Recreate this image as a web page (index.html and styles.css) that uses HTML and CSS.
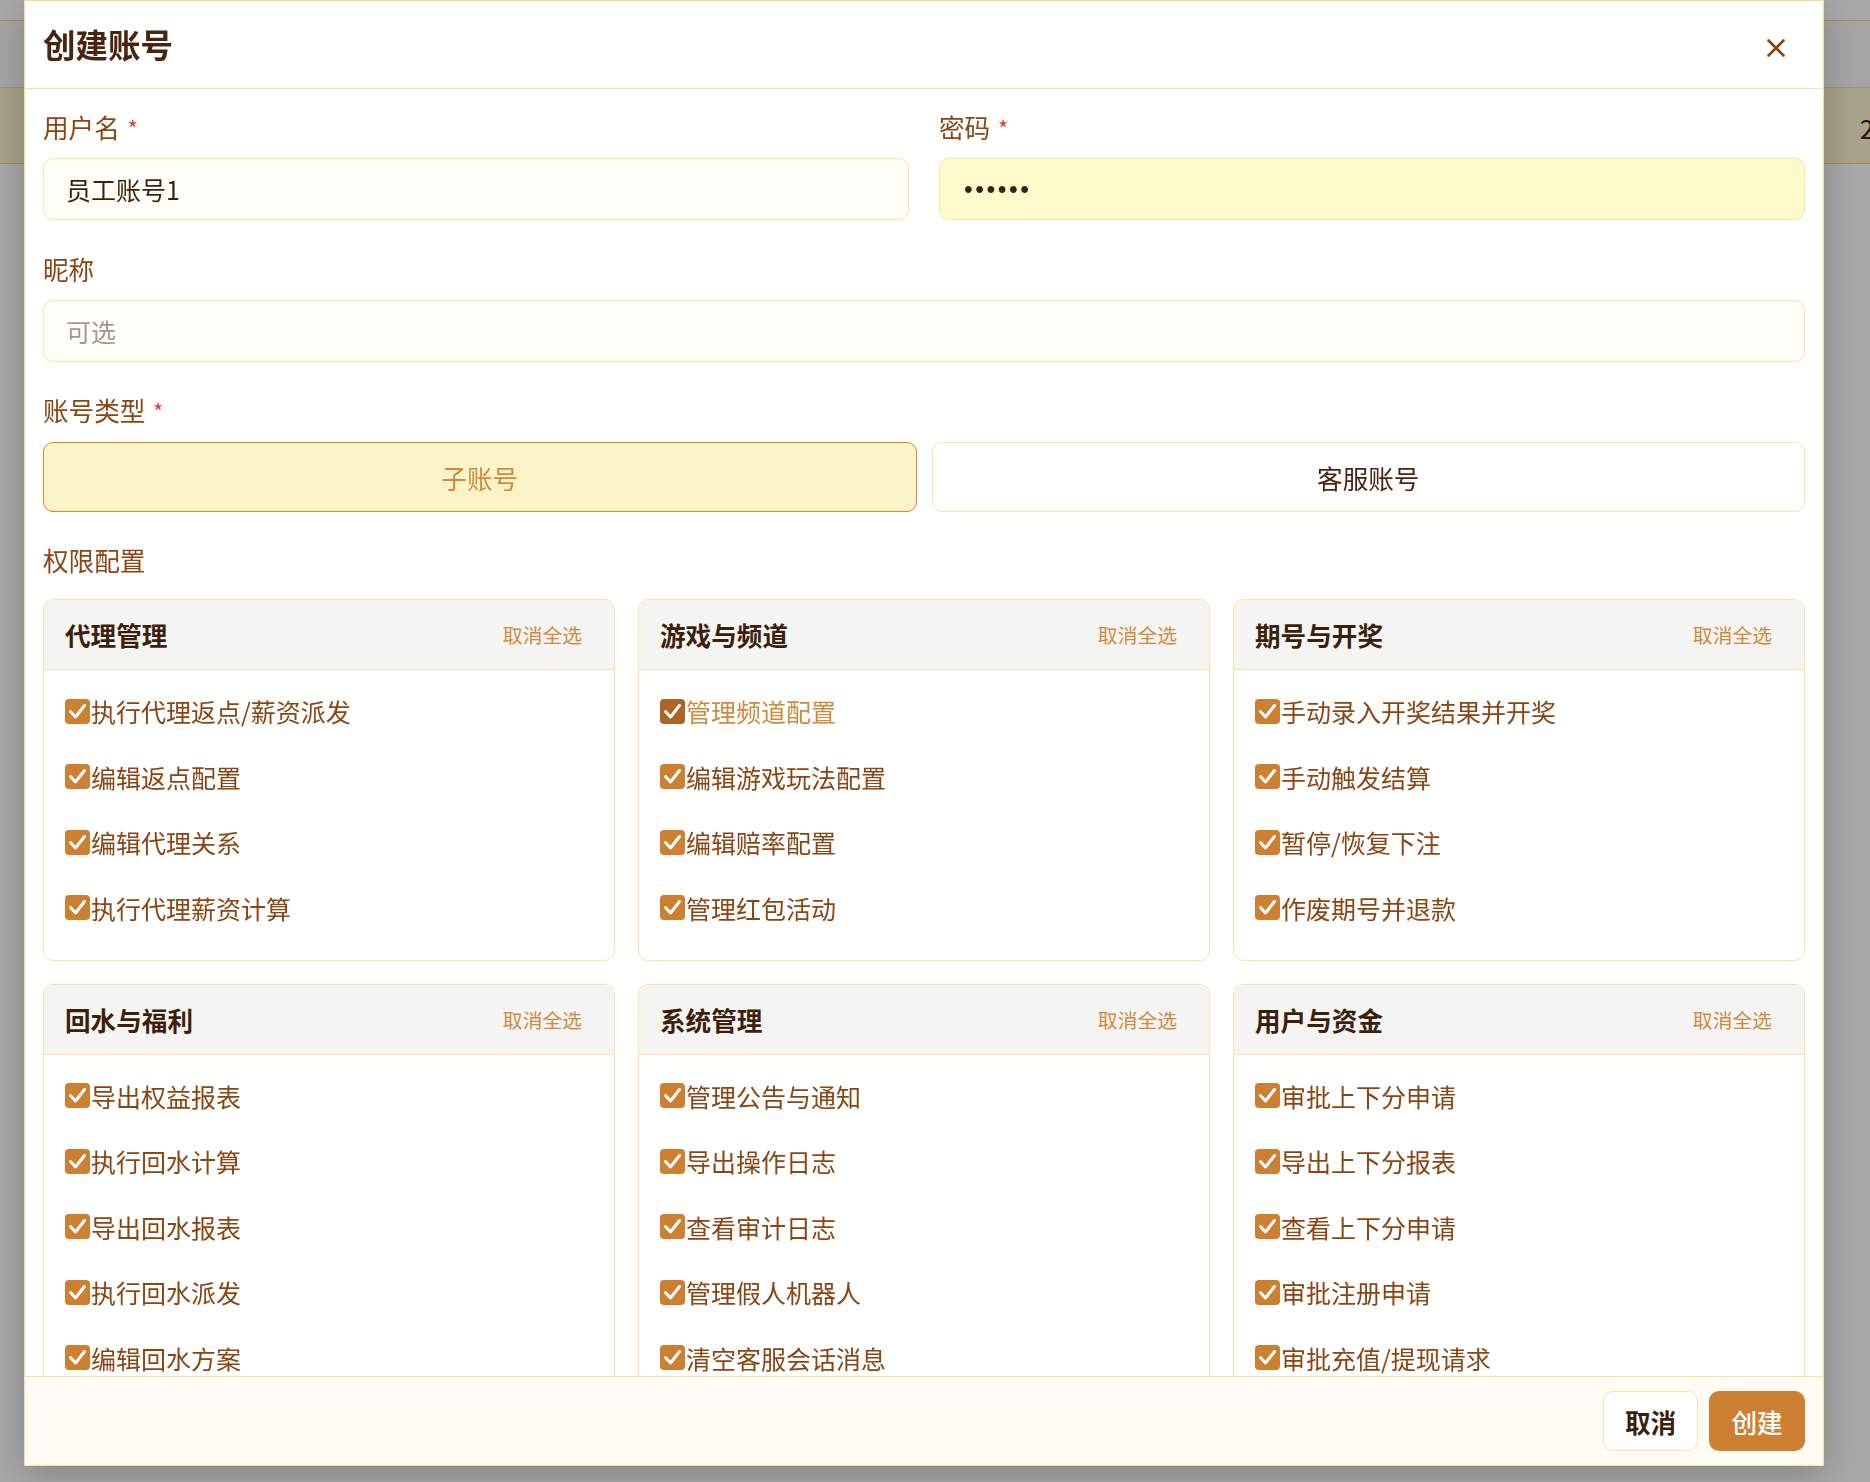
FILE: index.html
```html
<!DOCTYPE html>
<html lang="zh-CN">
<head>
<meta charset="utf-8">
<title>创建账号</title>
<link rel="stylesheet" href="styles.css">
</head>
<body>
<div class="page">
  <div class="page-top"></div>
  <div class="page-sub"></div>
  <div class="page-band"><span class="band-num">2</span></div>
</div>

<div class="overlay">
  <div class="modal">
    <div class="modal-header">
      <h2 class="modal-title">创建账号</h2>
      <button class="close-btn" aria-label="关闭">
        <svg width="18" height="18" viewBox="0 0 18 18"><path d="M1.5 1.5 L16.5 16.5 M16.5 1.5 L1.5 16.5" stroke="#8b4513" stroke-width="2.6" stroke-linecap="round" fill="none"/></svg>
      </button>
    </div>

    <div class="modal-body">
      <div class="row-2 group">
        <div class="field">
          <label class="field-label">用户名 <span class="req">*</span></label>
          <input class="text-input" type="text" value="员工账号1">
        </div>
        <div class="field">
          <label class="field-label">密码 <span class="req">*</span></label>
          <input class="text-input autofill" type="password" value="123456">
        </div>
      </div>

      <div class="field group group-nick">
        <label class="field-label">昵称</label>
        <input class="text-input" type="text" placeholder="可选">
      </div>

      <div class="field group group-type">
        <label class="field-label type-label">账号类型 <span class="req">*</span></label>
        <div class="type-row">
          <button class="type-btn active">子账号</button>
          <button class="type-btn">客服账号</button>
        </div>
      </div>

      <div class="field group">
        <label class="field-label perm-label">权限配置</label>
        <div class="perm-grid">
          <div class="card">
            <div class="card-header"><span class="card-title">代理管理</span><button class="deselect">取消全选</button></div>
            <div class="card-body">
              <label class="item"><span class="cb"><svg viewBox="0 0 25 25"><path d="M5.5 12.5 L10.5 18 L19.5 6.5"/></svg></span>执行代理返点/薪资派发</label>
              <label class="item"><span class="cb"><svg viewBox="0 0 25 25"><path d="M5.5 12.5 L10.5 18 L19.5 6.5"/></svg></span>编辑返点配置</label>
              <label class="item"><span class="cb"><svg viewBox="0 0 25 25"><path d="M5.5 12.5 L10.5 18 L19.5 6.5"/></svg></span>编辑代理关系</label>
              <label class="item"><span class="cb"><svg viewBox="0 0 25 25"><path d="M5.5 12.5 L10.5 18 L19.5 6.5"/></svg></span>执行代理薪资计算</label>
            </div>
          </div>
          <div class="card">
            <div class="card-header"><span class="card-title">游戏与频道</span><button class="deselect">取消全选</button></div>
            <div class="card-body">
              <label class="item hover"><span class="cb"><svg viewBox="0 0 25 25"><path d="M5.5 12.5 L10.5 18 L19.5 6.5"/></svg></span>管理频道配置</label>
              <label class="item"><span class="cb"><svg viewBox="0 0 25 25"><path d="M5.5 12.5 L10.5 18 L19.5 6.5"/></svg></span>编辑游戏玩法配置</label>
              <label class="item"><span class="cb"><svg viewBox="0 0 25 25"><path d="M5.5 12.5 L10.5 18 L19.5 6.5"/></svg></span>编辑赔率配置</label>
              <label class="item"><span class="cb"><svg viewBox="0 0 25 25"><path d="M5.5 12.5 L10.5 18 L19.5 6.5"/></svg></span>管理红包活动</label>
            </div>
          </div>
          <div class="card">
            <div class="card-header"><span class="card-title">期号与开奖</span><button class="deselect">取消全选</button></div>
            <div class="card-body">
              <label class="item"><span class="cb"><svg viewBox="0 0 25 25"><path d="M5.5 12.5 L10.5 18 L19.5 6.5"/></svg></span>手动录入开奖结果并开奖</label>
              <label class="item"><span class="cb"><svg viewBox="0 0 25 25"><path d="M5.5 12.5 L10.5 18 L19.5 6.5"/></svg></span>手动触发结算</label>
              <label class="item"><span class="cb"><svg viewBox="0 0 25 25"><path d="M5.5 12.5 L10.5 18 L19.5 6.5"/></svg></span>暂停/恢复下注</label>
              <label class="item"><span class="cb"><svg viewBox="0 0 25 25"><path d="M5.5 12.5 L10.5 18 L19.5 6.5"/></svg></span>作废期号并退款</label>
            </div>
          </div>
          <div class="card">
            <div class="card-header"><span class="card-title">回水与福利</span><button class="deselect">取消全选</button></div>
            <div class="card-body">
              <label class="item"><span class="cb"><svg viewBox="0 0 25 25"><path d="M5.5 12.5 L10.5 18 L19.5 6.5"/></svg></span>导出权益报表</label>
              <label class="item"><span class="cb"><svg viewBox="0 0 25 25"><path d="M5.5 12.5 L10.5 18 L19.5 6.5"/></svg></span>执行回水计算</label>
              <label class="item"><span class="cb"><svg viewBox="0 0 25 25"><path d="M5.5 12.5 L10.5 18 L19.5 6.5"/></svg></span>导出回水报表</label>
              <label class="item"><span class="cb"><svg viewBox="0 0 25 25"><path d="M5.5 12.5 L10.5 18 L19.5 6.5"/></svg></span>执行回水派发</label>
              <label class="item"><span class="cb"><svg viewBox="0 0 25 25"><path d="M5.5 12.5 L10.5 18 L19.5 6.5"/></svg></span>编辑回水方案</label>
            </div>
          </div>
          <div class="card">
            <div class="card-header"><span class="card-title">系统管理</span><button class="deselect">取消全选</button></div>
            <div class="card-body">
              <label class="item"><span class="cb"><svg viewBox="0 0 25 25"><path d="M5.5 12.5 L10.5 18 L19.5 6.5"/></svg></span>管理公告与通知</label>
              <label class="item"><span class="cb"><svg viewBox="0 0 25 25"><path d="M5.5 12.5 L10.5 18 L19.5 6.5"/></svg></span>导出操作日志</label>
              <label class="item"><span class="cb"><svg viewBox="0 0 25 25"><path d="M5.5 12.5 L10.5 18 L19.5 6.5"/></svg></span>查看审计日志</label>
              <label class="item"><span class="cb"><svg viewBox="0 0 25 25"><path d="M5.5 12.5 L10.5 18 L19.5 6.5"/></svg></span>管理假人机器人</label>
              <label class="item"><span class="cb"><svg viewBox="0 0 25 25"><path d="M5.5 12.5 L10.5 18 L19.5 6.5"/></svg></span>清空客服会话消息</label>
            </div>
          </div>
          <div class="card">
            <div class="card-header"><span class="card-title">用户与资金</span><button class="deselect">取消全选</button></div>
            <div class="card-body">
              <label class="item"><span class="cb"><svg viewBox="0 0 25 25"><path d="M5.5 12.5 L10.5 18 L19.5 6.5"/></svg></span>审批上下分申请</label>
              <label class="item"><span class="cb"><svg viewBox="0 0 25 25"><path d="M5.5 12.5 L10.5 18 L19.5 6.5"/></svg></span>导出上下分报表</label>
              <label class="item"><span class="cb"><svg viewBox="0 0 25 25"><path d="M5.5 12.5 L10.5 18 L19.5 6.5"/></svg></span>查看上下分申请</label>
              <label class="item"><span class="cb"><svg viewBox="0 0 25 25"><path d="M5.5 12.5 L10.5 18 L19.5 6.5"/></svg></span>审批注册申请</label>
              <label class="item"><span class="cb"><svg viewBox="0 0 25 25"><path d="M5.5 12.5 L10.5 18 L19.5 6.5"/></svg></span>审批充值/提现请求</label>
            </div>
          </div>
        </div>
      </div>
    </div>

    <div class="modal-footer">
      <button class="btn btn-cancel">取消</button>
      <button class="btn btn-primary">创建</button>
    </div>
  </div>
</div>
</body>
</html>
```

FILE: styles.css
```css
* { box-sizing: border-box; }

html, body {
  margin: 0;
  height: 100%;
}

body {
  font-family: "Noto Sans CJK SC", "Noto Sans", sans-serif;
  background: #ffffff;
  overflow: hidden;
}

/* underlying page (dimmed by the overlay) */
.page { height: 100vh; }
.page-top {
  height: 21px;
  background: #ffffff;
  border-bottom: 1px solid #f3d874;
}
.page-sub {
  height: 67px;
  background: #fbfbfb;
  border-bottom: 1px solid #e9e2c6;
}
.page-band {
  height: 76px;
  background: #fff9d0;
  border-bottom: 1px solid #f1d677;
  display: flex;
  align-items: center;
  justify-content: flex-end;
}
.band-num {
  font-size: 25.6px;
  color: #3b1f0e;
  margin-right: -4px;
  padding-top: 4px;
}

/* overlay + modal */
.overlay {
  position: fixed;
  inset: 0;
  background: rgba(0, 0, 0, 0.34);
  display: flex;
  align-items: flex-start;
  padding-left: 24px;
}

.modal {
  width: 1800px;
  height: 1466px;
  background: #ffffff;
  border: 1px solid #f3df95;
  display: flex;
  flex-direction: column;
  box-shadow: 0 10px 36px rgba(0, 0, 0, 0.22);
}

.modal-header {
  flex: none;
  height: 88px;
  border-bottom: 1px solid #f7e39b;
  display: flex;
  align-items: center;
  justify-content: space-between;
  padding: 0 27px 1px 18px;
}

.modal-title {
  margin: 0;
  font-size: 32.5px;
  font-weight: 700;
  line-height: 1;
  color: #4a2410;
}

.close-btn {
  width: 40px;
  height: 40px;
  border: none;
  background: none;
  padding: 0;
  margin-top: 8px;
  display: flex;
  align-items: center;
  justify-content: center;
}

.modal-body {
  flex: 1;
  min-height: 0;
  overflow: hidden;
  padding: 18px 18px 0;
}

.row-2 {
  display: grid;
  grid-template-columns: 1fr 1fr;
  column-gap: 30px;
}

.group { margin-bottom: 28px; }
.row-2.group { margin-bottom: 29px; }

.field-label {
  display: block;
  font-size: 25.6px;
  line-height: 40px;
  color: #8b4513;
  margin-bottom: 11px;
}

.type-label { margin-bottom: 12px; }
.perm-label { margin-bottom: 19px; }

.req {
  color: #e53935;
  font-size: 22px;
  margin-left: 2px;
  vertical-align: 1px;
}

.text-input {
  display: block;
  width: 100%;
  height: 62px;
  border: 1px solid #f7e4a3;
  border-radius: 10px;
  background: #fffdf7;
  padding: 0 22px;
  font-family: inherit;
  font-size: 25px;
  color: #3b1f0e;
  outline: none;
}

.text-input::placeholder { color: #a3978b; }

.text-input.autofill {
  background: #fffbcc;
  border-color: #f9e49b;
  padding-left: 24px;
  font-family: "Liberation Sans", Arial, sans-serif;
  letter-spacing: 2.5px;
}

.type-row {
  display: grid;
  grid-template-columns: 1fr 1fr;
  column-gap: 15px;
}

.type-btn {
  height: 70px;
  border-radius: 10px;
  border: 1px solid #f7e4a3;
  background: #ffffff;
  font-family: inherit;
  font-size: 25.6px;
  color: #4a2410;
}

.type-btn.active {
  background: #fcf3c9;
  border: 1.5px solid #cf8636;
  color: #d08a3c;
}

/* permissions */
.perm-grid {
  display: grid;
  grid-template-columns: repeat(3, 1fr);
  gap: 23px;
  align-items: start;
}

.card {
  border: 1px solid #f7e5a5;
  border-radius: 10px;
  overflow: hidden;
  background: #ffffff;
}

.card-header {
  height: 70px;
  display: flex;
  align-items: center;
  justify-content: space-between;
  padding: 0 20px 0 21px;
  background: #f4f4f2;
  border-bottom: 1px solid #f7e5a5;
}

.card-title {
  font-size: 25.6px;
  font-weight: 700;
  color: #3d1f0e;
}

.deselect {
  border: none;
  background: none;
  font-family: inherit;
  font-size: 19.8px;
  color: #cf8a3e;
  padding: 4px 12px;
}

.card-body {
  display: flex;
  flex-direction: column;
  gap: 25.5px;
  padding: 21px 21px 32px;
}

.item {
  display: flex;
  align-items: center;
  height: 40px;
  font-size: 25px;
  line-height: 40px;
  color: #8b4513;
}

.cb {
  flex: none;
  width: 25px;
  height: 25px;
  border-radius: 4px;
  background: #cd7f32;
  display: flex;
  align-items: center;
  justify-content: center;
  margin-right: 1px;
}

.cb svg {
  width: 25px;
  height: 25px;
}

.cb path {
  fill: none;
  stroke: #ffffff;
  stroke-width: 3;
  stroke-linecap: round;
  stroke-linejoin: round;
}

.item.hover { color: #d08a3c; }
.item.hover .cb { background: #ad6427; }

/* footer */
.modal-footer {
  flex: none;
  height: 89px;
  border-top: 1px solid #f7e39b;
  background: #fffcf5;
  display: flex;
  align-items: center;
  justify-content: flex-end;
  gap: 11px;
  padding: 0 18px;
}

.btn {
  height: 60px;
  border-radius: 10px;
  font-family: inherit;
  font-size: 25.6px;
}

.btn-cancel {
  width: 95px;
  background: #ffffff;
  border: 1px solid #f7e4a3;
  color: #3b1f0e;
  font-weight: 700;
}

.btn-primary {
  width: 96px;
  background: #cd7f32;
  border: none;
  color: #ffffff;
  font-weight: 500;
}
```
